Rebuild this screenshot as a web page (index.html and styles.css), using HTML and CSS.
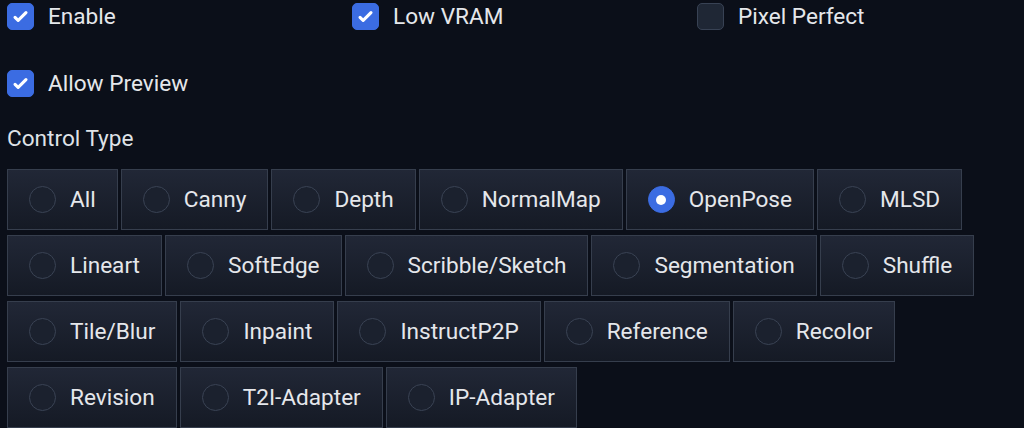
FILE: index.html
```html
<!DOCTYPE html>
<html>
<head>
<meta charset="utf-8">
<link rel="stylesheet" href="styles.css">
</head>
<body>
<div class="panel">
  <div class="checks">
    <label class="check"><span class="box on"><svg viewBox="0 0 16 16"><path d="M12.207 4.793a1 1 0 010 1.414l-5 5a1 1 0 01-1.414 0l-2-2a1 1 0 011.414-1.414L6.5 9.086l4.293-4.293a1 1 0 011.414 0z" fill="#fff"/></svg></span><span>Enable</span></label>
    <label class="check"><span class="box on"><svg viewBox="0 0 16 16"><path d="M12.207 4.793a1 1 0 010 1.414l-5 5a1 1 0 01-1.414 0l-2-2a1 1 0 011.414-1.414L6.5 9.086l4.293-4.293a1 1 0 011.414 0z" fill="#fff"/></svg></span><span>Low VRAM</span></label>
    <label class="check"><span class="box"></span><span>Pixel Perfect</span></label>
    <label class="check"><span class="box on"><svg viewBox="0 0 16 16"><path d="M12.207 4.793a1 1 0 010 1.414l-5 5a1 1 0 01-1.414 0l-2-2a1 1 0 011.414-1.414L6.5 9.086l4.293-4.293a1 1 0 011.414 0z" fill="#fff"/></svg></span><span>Allow Preview</span></label>
  </div>
  <div class="group-label">Control Type</div>
  <div class="radios">
    <label class="radio"><span class="dot"></span><span>All</span></label>
    <label class="radio"><span class="dot"></span><span>Canny</span></label>
    <label class="radio"><span class="dot"></span><span>Depth</span></label>
    <label class="radio"><span class="dot"></span><span>NormalMap</span></label>
    <label class="radio"><span class="dot on"></span><span>OpenPose</span></label>
    <label class="radio"><span class="dot"></span><span>MLSD</span></label>
    <label class="radio"><span class="dot"></span><span>Lineart</span></label>
    <label class="radio"><span class="dot"></span><span>SoftEdge</span></label>
    <label class="radio"><span class="dot"></span><span>Scribble/Sketch</span></label>
    <label class="radio"><span class="dot"></span><span>Segmentation</span></label>
    <label class="radio"><span class="dot"></span><span>Shuffle</span></label>
    <label class="radio"><span class="dot"></span><span>Tile/Blur</span></label>
    <label class="radio"><span class="dot"></span><span>Inpaint</span></label>
    <label class="radio"><span class="dot"></span><span>InstructP2P</span></label>
    <label class="radio"><span class="dot"></span><span>Reference</span></label>
    <label class="radio"><span class="dot"></span><span>Recolor</span></label>
    <label class="radio"><span class="dot"></span><span>Revision</span></label>
    <label class="radio"><span class="dot"></span><span>T2I-Adapter</span></label>
    <label class="radio"><span class="dot"></span><span>IP-Adapter</span></label>
  </div>
</div>
</body>
</html>
```
FILE: styles.css
```css
html, body {
  margin: 0;
  padding: 0;
  background: #0b0f19;
}
body {
  font-family: Roboto, "Noto Sans", sans-serif;
  font-size: 22.6px;
  color: #e5e7eb;
  overflow: hidden;
  height: 428px;
}
.panel {
  padding: 2px 0 0 7px;
}
.checks {
  display: grid;
  grid-template-columns: 345px 345px 300px;
  row-gap: 38px;
}
.check {
  display: flex;
  align-items: center;
  gap: 14px;
  line-height: 29px;
  height: 29px;
}
.box {
  box-sizing: border-box;
  width: 27px;
  height: 27px;
  border-radius: 5px;
  background: #1f2735;
  border: 1.5px solid #384254;
  display: flex;
  align-items: center;
  justify-content: center;
  flex: none;
}
.box.on {
  background: #3b6ce2;
  border-color: #3b6ce2;
}
.box svg {
  width: 27px;
  height: 27px;
  display: block;
}
.group-label {
  margin-top: 27px;
  line-height: 28px;
  color: #dfe2e7;
}
.radios {
  margin-top: 16px;
  display: flex;
  flex-wrap: wrap;
  column-gap: 3px;
  row-gap: 5px;
  padding-right: 10px;
}
.radio {
  box-sizing: border-box;
  height: 61px;
  display: flex;
  align-items: center;
  gap: 14px;
  padding: 0 21px;
  border: 1px solid #363e4d;
  background: linear-gradient(to bottom, #212736, #151a25);
  line-height: 28px;
}
.dot {
  box-sizing: border-box;
  width: 27px;
  height: 27px;
  border-radius: 50%;
  border: 1.5px solid #3a4354;
  background: #1b212e;
  flex: none;
  display: flex;
  align-items: center;
  justify-content: center;
}
.dot.on {
  background: #3b6ce2;
  border-color: #3b6ce2;
}
.dot.on::after {
  content: "";
  width: 10px;
  height: 10px;
  border-radius: 50%;
  background: #fff;
}
```
